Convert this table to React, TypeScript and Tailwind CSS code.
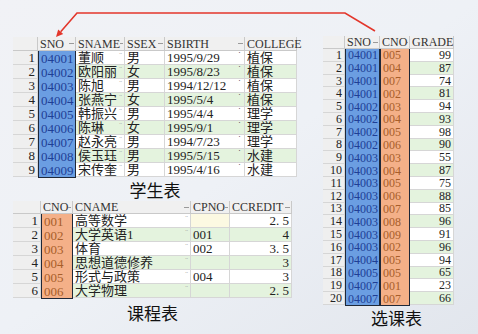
type Tone = "plain" | "num" | "blue" | "orange";

type Col = {
    title: string;
    w: number;
    align?: "left" | "right";
    tone?: Tone;
    mark?: "dots" | "tick";
};

const serif = "font-['Liberation_Serif','Noto_Sans_CJK_SC',serif]";

const studentCols: Col[] = [
    { title: "", w: 25, align: "right", tone: "num" },
    { title: "SNO", w: 38, tone: "blue" },
    { title: "SNAME", w: 49, mark: "dots" },
    { title: "SSEX", w: 40 },
    { title: "SBIRTH", w: 80, mark: "tick" },
    { title: "COLLEGE", w: 52 },
];

const studentRows = [
    ["1", "04001", "董顺", "男", "1995/9/29", "植保"],
    ["2", "04002", "欧阳丽", "女", "1995/8/23", "植保"],
    ["3", "04003", "陈旭", "男", "1994/12/12", "植保"],
    ["4", "04004", "张燕宁", "女", "1995/5/4", "植保"],
    ["5", "04005", "韩振兴", "男", "1995/4/4", "理学"],
    ["6", "04006", "陈琳", "女", "1995/9/1", "理学"],
    ["7", "04007", "赵永亮", "男", "1994/7/23", "理学"],
    ["8", "04008", "侯玉珏", "男", "1995/5/15", "水建"],
    ["9", "04009", "宋传奎", "男", "1995/4/16", "水建"],
];

const courseCols: Col[] = [
    { title: "", w: 28, align: "right", tone: "num" },
    { title: "CNO", w: 32, tone: "orange" },
    { title: "CNAME", w: 118, mark: "dots" },
    { title: "CPNO", w: 39 },
    { title: "CCREDIT", w: 62, align: "right" },
];

const courseRows = [
    ["1", "001", "高等数学", "", "2. 5"],
    ["2", "002", "大学英语1", "001", "4"],
    ["3", "003", "体育", "002", "3. 5"],
    ["4", "004", "思想道德修养", "", "3"],
    ["5", "005", "形式与政策", "004", "3"],
    ["6", "006", "大学物理", "", "2. 5"],
];

const scCols: Col[] = [
    { title: "", w: 22, align: "right", tone: "num" },
    { title: "SNO", w: 35, tone: "blue" },
    { title: "CNO", w: 30, tone: "orange" },
    { title: "GRADE", w: 44, align: "right" },
];

const scRaw: [string, string, string][] = [
    ["04001", "005", "99"],
    ["04001", "004", "87"],
    ["04001", "007", "74"],
    ["04001", "002", "81"],
    ["04002", "003", "94"],
    ["04002", "004", "93"],
    ["04002", "005", "98"],
    ["04002", "006", "90"],
    ["04003", "003", "55"],
    ["04003", "004", "87"],
    ["04003", "005", "75"],
    ["04003", "006", "88"],
    ["04003", "007", "85"],
    ["04003", "008", "96"],
    ["04003", "009", "91"],
    ["04003", "002", "96"],
    ["04004", "005", "94"],
    ["04005", "005", "65"],
    ["04007", "001", "23"],
    ["04007", "007", "66"],
];
const scRows = scRaw.map((r, i) => [String(i + 1), ...r]);

const cellTone = (tone: Tone | undefined, i: number, yellowFirst: boolean) => {
    if (tone === "num") return "bg-[#efefef] text-[#222]";
    if (tone === "blue") return "bg-[#6b9ee2] text-[#1f3f96]";
    if (tone === "orange") return "bg-[#f4b088] text-[#a85e2a]";
    if (yellowFirst && i === 0) return "bg-[#fcf9e2] text-[#222]";
    return i % 2 === 1 ? "bg-[#e4f3de] text-[#222]" : "bg-white text-[#222]";
};

const Column = ({ col, values, rowH, headH, fontSize, yellowFirst = false }: {
    col: Col;
    values: string[];
    rowH: number;
    headH: number;
    fontSize: string;
    yellowFirst?: boolean;
}) => {
    const hi = col.tone === "blue" || col.tone === "orange";
    return (
        <div className="flex flex-col shrink-0" style={{ width: col.w }}>
            <div
                className="flex items-center justify-between bg-[#f0f0f0] border-b border-r border-[#c9c9c9] pl-[2px] text-[12px] text-[#333] leading-none"
                style={{ height: headH }}
            >
                <span>{col.title}</span>
                {col.title && <span className="w-[5px] h-px bg-[#9a9a9a] mr-[1px]" />}
            </div>
            <div className={hi ? "border-x border-b border-[#1f2838]" : ""}>
                {values.map((v, i) => (
                    <div
                        key={i}
                        className={`flex items-center ${col.align === "right" ? "justify-end pr-[2px]" : "justify-between pl-[2px]"} ${hi ? "" : "border-b border-r border-[#d6d6d6]"} ${cellTone(col.tone, i, yellowFirst)} ${fontSize} leading-none overflow-hidden whitespace-nowrap`}
                        style={{ height: rowH }}
                    >
                        <span>{v}</span>
                        {col.mark === "dots" && <span className="self-start text-[8px] text-[#a0a0a0] mr-[2px] mt-[1px]">¨</span>}
                        {col.mark === "tick" && <span className="self-start text-[9px] text-[#222] mr-[3px]">˙</span>}
                    </div>
                ))}
            </div>
        </div>
    );
};

const Table = ({ cols, rows, rowH, headH, fontSize, yellowCol }: {
    cols: Col[];
    rows: string[][];
    rowH: number;
    headH: number;
    fontSize: string;
    yellowCol?: number;
}) => (
    <div className={`flex ${serif}`}>
        {cols.map((c, ci) => (
            <Column
                key={ci}
                col={c}
                values={rows.map(r => r[ci])}
                rowH={rowH}
                headH={headH}
                fontSize={fontSize}
                yellowFirst={yellowCol === ci}
            />
        ))}
    </div>
);

const Caption = ({ text, className = "" }: { text: string; className?: string }) => (
    <div className={`text-[17px] leading-[20px] text-[#111] font-['Noto_Sans_CJK_SC',sans-serif] text-center ${className}`}>
        {text}
    </div>
);

export default function App() {
    return (
        <div className="relative w-[478px] h-[334px] overflow-hidden bg-gradient-to-br from-[#f1f2f6] via-[#eef1f6] to-[#e2e6ed]">
            <div className="flex">
                <div className="flex flex-col pl-[13px] pt-[37px] w-[323px]">
                    <div className="w-[284px]">
                        <Table cols={studentCols} rows={studentRows} rowH={14} headH={14} fontSize="text-[13px]" />
                        <Caption text="学生表" className="mt-[2px]" />
                    </div>
                    <div className="w-[279px] mt-[1px]">
                        <Table cols={courseCols} rows={courseRows} rowH={14} headH={13} fontSize="text-[13px]" yellowCol={3} />
                        <Caption text="课程表" className="mt-[4px]" />
                    </div>
                </div>
                <div className="flex flex-col pt-[36px]">
                    <Table cols={scCols} rows={scRows} rowH={12.8} headH={13} fontSize="text-[12px]" />
                    <Caption text="选课表" className="pl-[16px] mt-[2px]" />
                </div>
            </div>
            <svg className="absolute inset-0 pointer-events-none" width="478" height="334">
                <polyline points="375,31 345,13 77,13 60.7,31.8" fill="none" stroke="#e3362b" strokeWidth="1.6" />
                <polygon points="56,37 63.2,34 58.2,29.6" fill="#e3362b" />
            </svg>
        </div>
    );
}
